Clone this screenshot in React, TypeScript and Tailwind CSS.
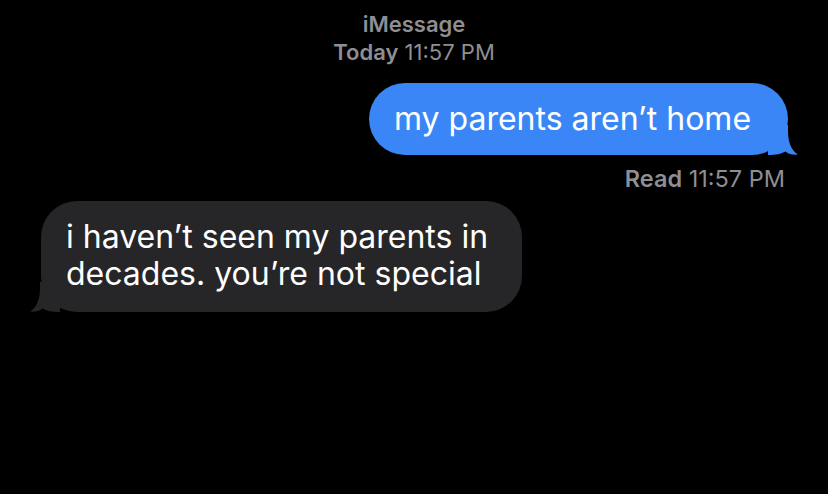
import React from "react";

const font = { fontFamily: "Inter, 'Noto Sans', sans-serif" };

function Tail({ color, flip }: { color: string; flip?: boolean }) {
  return (
    <svg
      width="30"
      height="30"
      viewBox="0 0 30 30"
      className={
        flip
          ? "absolute bottom-0 left-[-11px] -scale-x-100"
          : "absolute bottom-0 right-[-10px]"
      }
    >
      <path
        d="M20 0 L20 6 C20 17 23 25 30 29.6 C25 30.2 20.5 29 17.5 26.5 C13 29 8 30 0 30 L0 0 Z"
        fill={color}
      />
    </svg>
  );
}

export default function App() {
  return (
    <div
      className="w-[828px] h-[494px] bg-black flex flex-col overflow-hidden"
      style={font}
    >
      <div className="pt-[10px] flex flex-col items-center text-[22px] leading-[28px] text-[#8e8e93]">
        <div className="font-semibold">iMessage</div>
        <div>
          <span className="font-semibold">Today</span> 11:57 PM
        </div>
      </div>

      <div className="flex justify-end pr-[40px] mt-[17px]">
        <div className="relative w-[419px] h-[72px] rounded-[36px] bg-[#3b86f6] pl-[25px] pt-[17px] text-white text-[32px] leading-[37px] whitespace-nowrap">
          my parents aren’t home
          <Tail color="#3b86f6" />
        </div>
      </div>

      <div className="flex justify-end pr-[43px] mt-[10px] text-[23.5px] leading-[28px] text-[#8e8e93]">
        <div>
          <span className="font-semibold">Read</span> 11:57 PM
        </div>
      </div>

      <div className="flex pl-[41px] mt-[8px]">
        <div className="relative w-[481px] h-[111px] rounded-[36px] bg-[#262628] pl-[25px] pt-[17px] text-white text-[32px] leading-[37px] whitespace-nowrap">
          <div>i haven’t seen my parents in</div>
          <div>decades. you’re not special</div>
          <Tail color="#262628" flip />
        </div>
      </div>
    </div>
  );
}
